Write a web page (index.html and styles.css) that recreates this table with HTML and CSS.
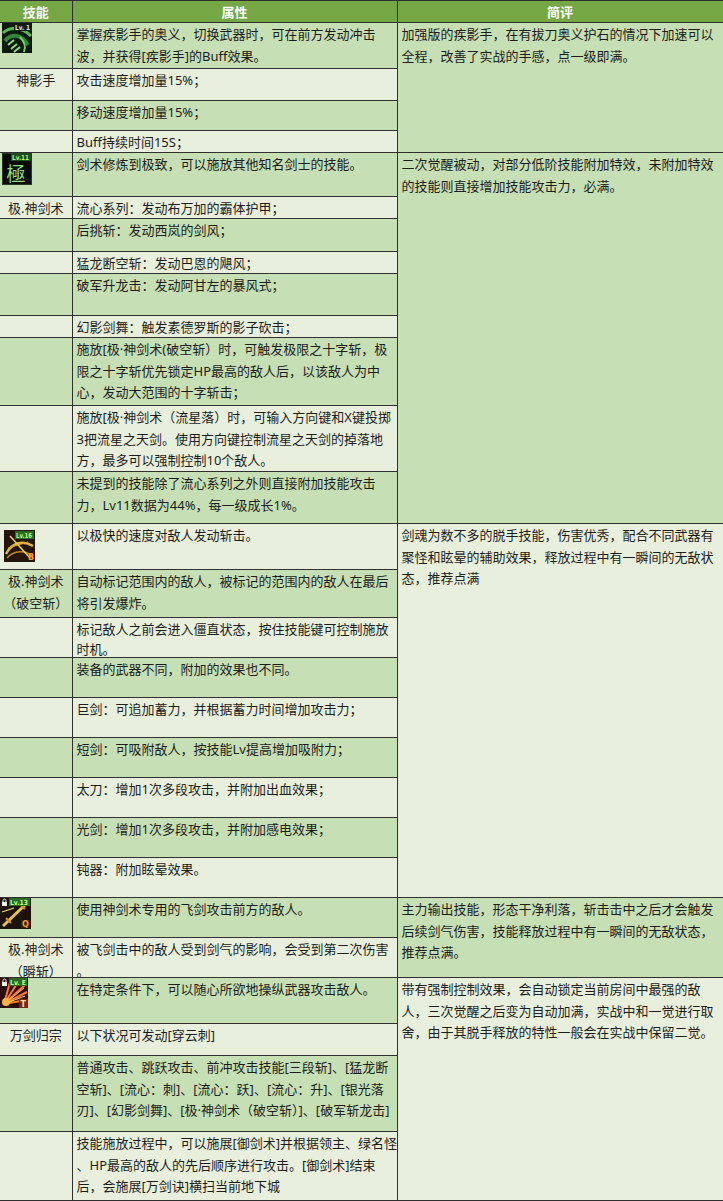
FILE: index.html
```html
<!DOCTYPE html>
<html lang="zh-CN">
<head>
<meta charset="utf-8">
<title>剑魂技能</title>
<link rel="stylesheet" href="styles.css">
</head>
<body>
<table class="sheet">
<colgroup><col class="c1"><col class="c2"><col class="c3"></colgroup>
<thead>
<tr class="h22"><th>技能</th><th>属性</th><th>简评</th></tr>
</thead>
<tbody>
<!-- 神影手 -->
<tr class="h46 g">
<td class="iconcell"><svg class="icon ic-a" width="30" height="30" viewBox="0 0 30 30"><rect width="30" height="30" fill="#0c1a0e"/><path d="M1 10 C8 3 20 4 29 13" stroke="#56b552" stroke-width="3" fill="none"/><path d="M3 18 C9 10 19 11 26 22" stroke="#2c8a36" stroke-width="4" fill="none"/><path d="M6 22 l6 -5 M9 26 l6 -5 M12 29 l6 -5" stroke="#8fd88a" stroke-width="2"/><path d="M18 14 C22 18 24 24 22 29" stroke="#7bcf6e" stroke-width="2" fill="none"/><rect x="12" y="0" width="18" height="8" fill="#0c1a0e"/><text x="13" y="7" font-size="7" font-weight="bold" fill="#e6e6e6" font-family="DejaVu Sans, sans-serif" textLength="15" lengthAdjust="spacingAndGlyphs">Lv. 1</text></svg></td>
<td><div class="t">掌握疾影手的奥义，切换武器时，可在前方发动冲击<br>波，并获得[疾影手]的Buff效果。</div></td>
<td rowspan="4" class="g"><div class="t">加强版的疾影手，在有拔刀奥义护石的情况下加速可以<br>全程，改善了实战的手感，点一级即满。</div></td>
</tr>
<tr class="h32 l"><td class="name"><div class="t">神影手</div></td><td><div class="t">攻击速度增加量15%；</div></td></tr>
<tr class="h30 g"><td></td><td><div class="t">移动速度增加量15%；</div></td></tr>
<tr class="h22 l"><td></td><td><div class="t">Buff持续时间15S；</div></td></tr>

<!-- 极.神剑术 -->
<tr class="h44 g">
<td class="iconcell"><svg class="icon ic-b" width="30" height="32" viewBox="0 0 30 32"><rect width="30" height="32" fill="#070b07"/><rect x="0.5" y="0.5" width="29" height="31" fill="none" stroke="#2a3a2a" stroke-width="1"/><text x="14" y="28" text-anchor="middle" font-size="19" fill="#8fdc7f" font-family="Noto Sans CJK TC, sans-serif">極</text><rect x="9" y="0" width="20" height="8" fill="#1f4d18"/><text x="10" y="7" font-size="7" font-weight="bold" fill="#a8f27f" font-family="DejaVu Sans, sans-serif" textLength="17" lengthAdjust="spacingAndGlyphs">Lv.11</text></svg></td>
<td><div class="t">剑术修炼到极致，可以施放其他知名剑士的技能。</div></td>
<td rowspan="9" class="g"><div class="t">二次觉醒被动，对部分低阶技能附加特效，未附加特效<br>的技能则直接增加技能攻击力，必满。</div></td>
</tr>
<tr class="h22 l"><td class="name"><div class="t">极.神剑术</div></td><td><div class="t">流心系列：发动布万加的霸体护甲；</div></td></tr>
<tr class="h33 g"><td></td><td><div class="t">后挑斩：发动西岚的剑风；</div></td></tr>
<tr class="h22 l"><td></td><td><div class="t">猛龙断空斩：发动巴恩的飓风；</div></td></tr>
<tr class="h42 g"><td></td><td><div class="t">破军升龙击：发动阿甘左的暴风式；</div></td></tr>
<tr class="h22 l"><td></td><td><div class="t">幻影剑舞：触发素德罗斯的影子砍击；</div></td></tr>
<tr class="h68 g"><td></td><td><div class="t">施放[极·神剑术(破空斩）时，可触发极限之十字斩，极<br>限之十字斩优先锁定HP最高的敌人后，以该敌人为中<br>心，发动大范围的十字斩击；</div></td></tr>
<tr class="h66 l"><td></td><td><div class="t">施放[极·神剑术（流星落）时，可输入方向键和X键投掷<br>3把流星之天剑。使用方向键控制流星之天剑的掉落地<br>方，最多可以强制控制10个敌人。</div></td></tr>
<tr class="h52 g"><td></td><td><div class="t">未提到的技能除了流心系列之外则直接附加技能攻击<br>力，Lv11数据为44%，每一级成长1%。</div></td></tr>

<!-- 极.神剑术（破空斩） -->
<tr class="h46 l">
<td class="iconcell"><svg class="icon ic-c" width="31" height="32" viewBox="0 0 31 32"><rect width="31" height="32" fill="#24160a"/><path d="M2 24 C8 12 20 10 29 16" stroke="#e2b645" stroke-width="2.5" fill="none"/><path d="M3 28 C10 20 22 20 28 26" stroke="#b9862c" stroke-width="1.5" fill="none"/><path d="M6 6 L26 28" stroke="#f0cd6a" stroke-width="1.5"/><path d="M4 18 L24 12" stroke="#d9a33a" stroke-width="1"/><rect x="11" y="1" width="19" height="8" fill="#2b6a1f"/><text x="12" y="8" font-size="7" font-weight="bold" fill="#b6ff8a" font-family="DejaVu Sans, sans-serif" textLength="16" lengthAdjust="spacingAndGlyphs">Lv.16</text><text x="24" y="30" font-size="8" font-weight="bold" fill="#ff9a3a" font-family="DejaVu Sans, sans-serif">B</text></svg></td>
<td><div class="t">以极快的速度对敌人发动斩击。</div></td>
<td rowspan="9" class="l"><div class="t">剑魂为数不多的脱手技能，伤害优秀，配合不同武器有<br>聚怪和眩晕的辅助效果，释放过程中有一瞬间的无敌状<br>态，推荐点满</div></td>
</tr>
<tr class="h48 g"><td class="name"><div class="t">极.神剑术<br>（破空斩）</div></td><td><div class="t">自动标记范围内的敌人，被标记的范围内的敌人在最后<br>将引发爆炸。</div></td></tr>
<tr class="h40 l"><td></td><td><div class="t tight">标记敌人之前会进入僵直状态，按住技能键可控制施放<br>时机。</div></td></tr>
<tr class="h40 g"><td></td><td><div class="t">装备的武器不同，附加的效果也不同。</div></td></tr>
<tr class="h40 l"><td></td><td><div class="t">巨剑：可追加蓄力，并根据蓄力时间增加攻击力；</div></td></tr>
<tr class="h40 g"><td></td><td><div class="t">短剑：可吸附敌人，按技能Lv提高增加吸附力；</div></td></tr>
<tr class="h40 l"><td></td><td><div class="t">太刀：增加1次多段攻击，并附加出血效果；</div></td></tr>
<tr class="h40 g"><td></td><td><div class="t">光剑：增加1次多段攻击，并附加感电效果；</div></td></tr>
<tr class="h40 l"><td></td><td><div class="t">钝器：附加眩晕效果。</div></td></tr>

<!-- 极.神剑术（瞬斩） -->
<tr class="h40 g">
<td class="iconcell"><svg class="icon ic-d" width="31" height="31" viewBox="0 0 31 31"><rect width="31" height="31" fill="#1b1208"/><path d="M3 28 L27 5" stroke="#e8c24e" stroke-width="3"/><path d="M6 20 L11 25 M20 6 L25 11" stroke="#c8952e" stroke-width="2"/><path d="M2 14 L14 10" stroke="#f3dc7a" stroke-width="1.2"/><rect x="1" y="1" width="7" height="8" fill="#1b1208"/><rect x="2" y="4" width="5" height="4" fill="#f2f2f2"/><path d="M3 4 V2.5 A1.5 1.5 0 0 1 6 2.5 V4" stroke="#f2f2f2" stroke-width="1" fill="none"/><rect x="9" y="0" width="21" height="8" fill="#2b6a1f"/><text x="10" y="7" font-size="7" font-weight="bold" fill="#b6ff8a" font-family="DejaVu Sans, sans-serif" textLength="18" lengthAdjust="spacingAndGlyphs">Lv.13</text><rect x="21" y="22" width="9" height="8" fill="#3a1c08"/><text x="22" y="29" font-size="8" font-weight="bold" fill="#ff9a3a" font-family="DejaVu Sans, sans-serif">Q</text></svg></td>
<td><div class="t">使用神剑术专用的飞剑攻击前方的敌人。</div></td>
<td rowspan="2" class="g"><div class="t">主力输出技能，形态干净利落，斩击击中之后才会触发<br>后续剑气伤害，技能释放过程中有一瞬间的无敌状态，<br>推荐点满。</div></td>
</tr>
<tr class="h40 l"><td class="name"><div class="t">极.神剑术<br>（瞬斩）</div></td><td><div class="t">被飞剑击中的敌人受到剑气的影响，会受到第二次伤害<br>。</div></td></tr>

<!-- 万剑归宗 -->
<tr class="h46 g">
<td class="iconcell"><svg class="icon ic-e" width="28" height="30" viewBox="0 0 28 30"><rect width="28" height="30" fill="#2a0d06"/><path d="M4 26 L26 6 M4 26 L27 14 M4 26 L26 22 M4 26 L18 4 M4 26 L10 4" stroke="#ff7a2a" stroke-width="2"/><path d="M4 26 L24 10 M4 26 L25 18" stroke="#ffd27a" stroke-width="1"/><circle cx="6" cy="24" r="4" fill="#ffb347"/><rect x="1" y="1" width="7" height="8" fill="#2a0d06"/><rect x="2" y="4" width="5" height="4" fill="#f2f2f2"/><path d="M3 4 V2.5 A1.5 1.5 0 0 1 6 2.5 V4" stroke="#f2f2f2" stroke-width="1" fill="none"/><rect x="9" y="0" width="18" height="8" fill="#2b6a1f"/><text x="10" y="7" font-size="7" font-weight="bold" fill="#b6ff8a" font-family="DejaVu Sans, sans-serif" textLength="16" lengthAdjust="spacingAndGlyphs">Lv. E</text><rect x="19" y="21" width="9" height="9" fill="#7a2a0a"/><text x="20.5" y="29" font-size="8" font-weight="bold" fill="#ffd9b0" font-family="DejaVu Sans, sans-serif">T</text></svg></td>
<td><div class="t">在特定条件下，可以随心所欲地操纵武器攻击敌人。</div></td>
<td rowspan="4" class="l"><div class="t">带有强制控制效果，会自动锁定当前房间中最强的敌<br>人，三次觉醒之后变为自动加满，实战中和一觉进行取<br>舍，由于其脱手释放的特性一般会在实战中保留二觉。</div></td>
</tr>
<tr class="h32 l"><td class="name"><div class="t">万剑归宗</div></td><td><div class="t">以下状况可发动[穿云刺]</div></td></tr>
<tr class="h76 g"><td></td><td><div class="t">普通攻击、跳跃攻击、前冲攻击技能[三段斩]、[猛龙断<br>空斩]、[流心：刺]、[流心：跃]、[流心：升]、[银光落<br>刃]、[幻影剑舞]、[极·神剑术（破空斩）]、[破军斩龙击]</div></td></tr>
<tr class="h69 l"><td></td><td><div class="t">技能施放过程中，可以施展[御剑术]并根据领主、绿名怪<br>、HP最高的敌人的先后顺序进行攻击。[御剑术]结束<br>后，会施展[万剑诀]横扫当前地下城</div></td></tr>
</tbody>
</table>
</body>
</html>
```

FILE: styles.css
```css
html, body {
  margin: 0;
  padding: 0;
  background: #ffffff;
}

body {
  font-family: "Noto Sans", "Noto Sans CJK SC", "Microsoft YaHei", sans-serif;
  font-size: 13px;
  color: #1c1c1c;
}

.sheet {
  border-collapse: collapse;
  table-layout: fixed;
  width: 723px;
}

.sheet col.c1 { width: 72px; }
.sheet col.c2 { width: 325px; }
.sheet col.c3 { width: 326px; }

.sheet th,
.sheet td {
  border: 1px solid #2f2f2f;
  padding: 0 2px 0 4px;
  vertical-align: top;
  text-align: left;
  white-space: nowrap;
  overflow: visible;
}

.sheet th:first-child,
.sheet td:first-child {
  border-left: none;
}

.sheet th {
  background: #75a845;
  color: #ffffff;
  font-weight: bold;
  text-align: center;
  vertical-align: middle;
  padding: 0;
  line-height: 20px;
  font-family: "Noto Sans CJK SC", sans-serif;
}

/* text block: never pushes the row taller than its fixed height */
.t {
  line-height: 21.5px;
  padding-top: 1px;
  margin-bottom: -20px;
}

.t.tight {
  line-height: 20px;
}

.g { background: #c6dfb4; }
.l { background: #e8f0dd; }

.sheet td.name {
  text-align: center;
  padding: 0;
}

.sheet td.iconcell {
  padding: 0;
}

.icon { display: block; }
.ic-a { margin: 0 0 0 2px; }
.ic-b { margin: 0 0 0 2px; }
.ic-c { margin: 6px 0 0 4px; }
.ic-d { margin: 0; }
.ic-e { margin: 0; }

.h22 { height: 22px; }
.h30 { height: 30px; }
.h32 { height: 32px; }
.h33 { height: 33px; }
.h40 { height: 40px; }
.h42 { height: 42px; }
.h44 { height: 44px; }
.h46 { height: 46px; }
.h48 { height: 48px; }
.h52 { height: 52px; }
.h66 { height: 66px; }
.h68 { height: 68px; }
.h69 { height: 69px; }
.h76 { height: 76px; }
```
